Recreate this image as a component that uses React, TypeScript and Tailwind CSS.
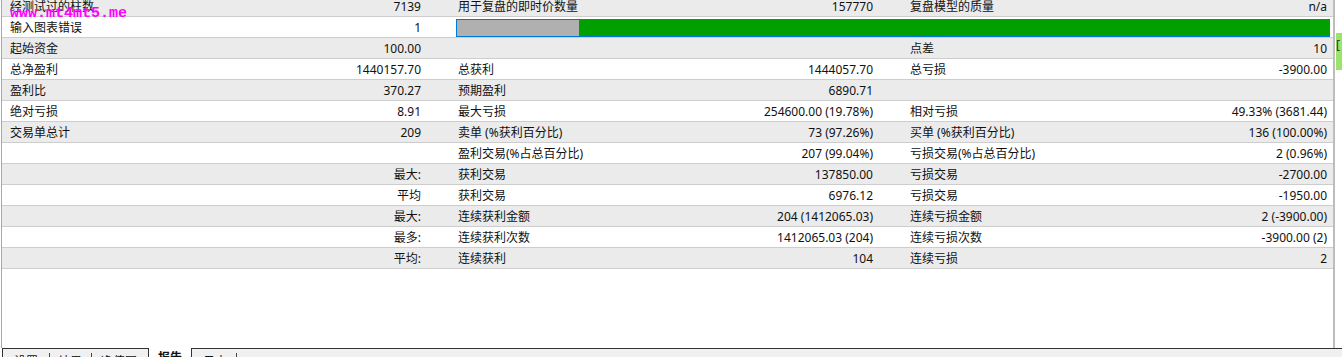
import React from "react";

type Pair = [string, string];

type Row = {
  c1: Pair;
  c2?: Pair;
  c3?: Pair;
  bar?: boolean;
};

// report rows, top to bottom
const rows: Row[] = [
  { c1: ["经测试过的柱数", "7139"], c2: ["用于复盘的即时价数量", "157770"], c3: ["复盘模型的质量", "n/a"] },
  { c1: ["输入图表错误", "1"], bar: true },
  { c1: ["起始资金", "100.00"], c2: ["", ""], c3: ["点差", "10"] },
  { c1: ["总净盈利", "1440157.70"], c2: ["总获利", "1444057.70"], c3: ["总亏损", "-3900.00"] },
  { c1: ["盈利比", "370.27"], c2: ["预期盈利", "6890.71"], c3: ["", ""] },
  { c1: ["绝对亏损", "8.91"], c2: ["最大亏损", "254600.00 (19.78%)"], c3: ["相对亏损", "49.33% (3681.44)"] },
  { c1: ["交易单总计", "209"], c2: ["卖单 (%获利百分比)", "73 (97.26%)"], c3: ["买单 (%获利百分比)", "136 (100.00%)"] },
  { c1: ["", ""], c2: ["盈利交易(%占总百分比)", "207 (99.04%)"], c3: ["亏损交易(%占总百分比)", "2 (0.96%)"] },
  { c1: ["", "最大:"], c2: ["获利交易", "137850.00"], c3: ["亏损交易", "-2700.00"] },
  { c1: ["", "平均"], c2: ["获利交易", "6976.12"], c3: ["亏损交易", "-1950.00"] },
  { c1: ["", "最大:"], c2: ["连续获利金额", "204 (1412065.03)"], c3: ["连续亏损金额", "2 (-3900.00)"] },
  { c1: ["", "最多:"], c2: ["连续获利次数", "1412065.03 (204)"], c3: ["连续亏损次数", "-3900.00 (2)"] },
  { c1: ["", "平均:"], c2: ["连续获利", "104"], c3: ["连续亏损", "2"] },
];

function App() {
  return (
    <div
      className="relative flex h-[357px] w-[1342px] flex-col overflow-hidden bg-white text-[12px] leading-[20px] text-[#111]"
      style={{ fontFamily: '"Noto Sans", "Noto Sans CJK SC", sans-serif' }}
    >
      {/* Report table */}
      <div className="flex h-[348px] shrink-0">
        <div className="ml-px flex w-[1332px] flex-col border-l border-[#a8a8a8]">
          <div className="-mt-1">
            {rows.map((r, i) => (
              <div
                key={i}
                className={`flex h-[21px] whitespace-nowrap border-b border-[#cdcdcd] pt-px ${
                  i % 2 === 0 ? "bg-[#ebebeb]" : "bg-white"
                }`}
              >
                <div className="flex h-[20px] w-[446px] shrink-0 justify-between pl-[8px] pr-[27px]">
                  <span>{r.c1[0]}</span>
                  <span>{r.c1[1]}</span>
                </div>
                {r.bar ? (
                  <div className="flex h-[19px] items-center pl-[8px]">
                    <div className="flex h-[18px] w-[874px] border border-[#0078d7]">
                      <div className="w-[122px] bg-[#b0b0b0]" />
                      <div className="flex-1 bg-[#00a000]" />
                    </div>
                  </div>
                ) : (
                  <>
                    <div className="flex h-[20px] w-[452px] shrink-0 justify-between pl-[10px] pr-[27px]">
                      <span>{r.c2?.[0]}</span>
                      <span>{r.c2?.[1]}</span>
                    </div>
                    <div className="flex h-[20px] w-[433px] shrink-0 justify-between pl-[10px] pr-[6px]">
                      <span>{r.c3?.[0]}</span>
                      <span>{r.c3?.[1]}</span>
                    </div>
                  </>
                )}
              </div>
            ))}
          </div>
        </div>
        {/* clipped neighbour panel on the right */}
        <div className="flex-1 border-l-2 border-[#bdbdbd]">
          <div className="ml-px mt-[33px] h-[37px] overflow-hidden bg-[#9be36b] pt-[4px] leading-[16px] text-[#333]">
            [
          </div>
        </div>
      </div>

      {/* Bottom tabs */}
      <div className="flex h-[20px] shrink-0 pl-[2px]">
        <div className="flex w-[147px] items-start border-l border-r border-t border-[#333] bg-[#f0f0f0] pt-[3px]">
          <span className="ml-[11px]">设置</span>
          <span className="ml-[11px] mt-[1px] h-[14px] w-px bg-[#444]" />
          <span className="ml-[8px]">结果</span>
          <span className="ml-[9px] mt-[1px] h-[14px] w-px bg-[#444]" />
          <span className="ml-[9px]">净值图</span>
        </div>
        <div className="w-[42px] bg-white pl-[9px] font-bold">报告</div>
        <div className="flex flex-1 items-start border-l border-t border-[#333] bg-[#f0f0f0] pt-[3px]">
          <span className="ml-[11px]">日志</span>
          <span className="ml-[9px] mt-[1px] h-[14px] w-px bg-[#444]" />
        </div>
      </div>

      {/* watermark */}
      <div
        className="absolute left-[10px] top-[6px] text-[15px] font-bold leading-none text-[#ff00ff]"
        style={{ fontFamily: '"Liberation Mono", monospace' }}
      >
        www.mt4mt5.me
      </div>
    </div>
  );
}

export default App;
